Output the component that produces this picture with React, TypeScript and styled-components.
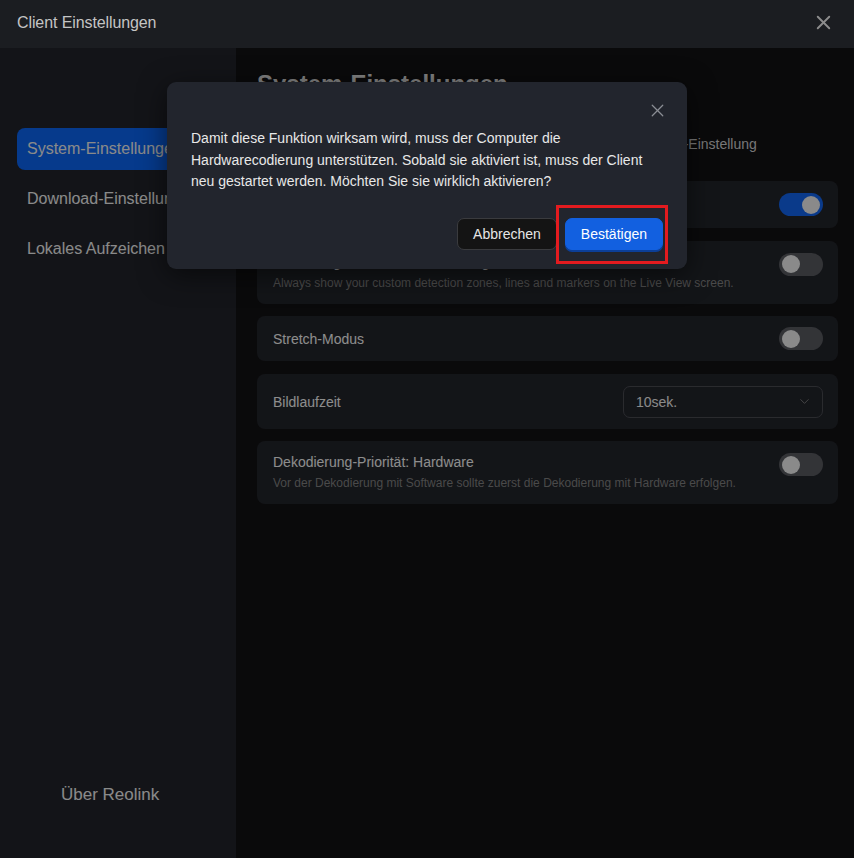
import { ChevronDown, X } from 'lucide-react';
import { createGlobalStyle, styled } from 'styled-components';

const GlobalStyle = createGlobalStyle`
  html, body {
    margin: 0;
    padding: 0;
    background: #0b0b0c;
  }
  body {
    font-family: "Liberation Sans", Arial, sans-serif;
  }
  * {
    box-sizing: border-box;
  }
`;

const Window = styled.div`
  position: relative;
  display: flex;
  flex-direction: column;
  width: 854px;
  height: 858px;
  overflow: hidden;
  background: #111113;
`;

const Header = styled.header`
  display: flex;
  align-items: center;
  justify-content: space-between;
  height: 48px;
  flex-shrink: 0;
  padding: 0 19px 3px 17px;
  background: #1b1d21;
`;

const WindowTitle = styled.span`
  font-size: 16px;
  color: #c4c4c4;
  letter-spacing: -0.1px;
`;

const IconButton = styled.button<{ $color: string }>`
  display: flex;
  align-items: center;
  justify-content: center;
  padding: 0;
  border: none;
  background: transparent;
  color: ${(p) => p.$color};
  cursor: pointer;
`;

const Body = styled.div`
  position: relative;
  display: flex;
  flex: 1;
  min-height: 0;
`;

const Sidebar = styled.nav`
  display: flex;
  flex-direction: column;
  justify-content: space-between;
  width: 236px;
  flex-shrink: 0;
  padding: 80px 17px 53px;
  background: #202228;
`;

const NavList = styled.div`
  display: flex;
  flex-direction: column;
  gap: 8px;
`;

const NavItem = styled.div<{ $active?: boolean }>`
  display: flex;
  align-items: center;
  height: 42px;
  padding: 0 10px;
  border-radius: 8px;
  font-size: 16px;
  color: #e6e6e6;
  white-space: nowrap;
  overflow: hidden;
  background: ${(p) => (p.$active ? '#0a61e9' : 'transparent')};
`;

const About = styled.div`
  padding-left: 44px;
  font-size: 17px;
  color: #e6e6e6;
`;

const Main = styled.main`
  display: flex;
  flex-direction: column;
  flex: 1;
  padding: 21px 16px 0 21px;
  background: #111113;
`;

const Heading = styled.h1`
  margin: 0;
  font-size: 24px;
  line-height: 30px;
  font-weight: 700;
  color: #d8d8d8;
`;

const Tabs = styled.div`
  display: flex;
  gap: 39px;
  margin-top: 35px;
  height: 20px;
  align-items: center;
`;

const Tab = styled.span`
  font-size: 14px;
  color: #c6c6c6;
  white-space: nowrap;
`;

const CardList = styled.div`
  display: flex;
  flex-direction: column;
  gap: 12.5px;
  margin-top: 27px;
`;

const Card = styled.div<{ $pad?: string }>`
  display: flex;
  flex-direction: column;
  justify-content: center;
  padding: ${(p) => p.$pad || '12px 15px 12px 16px'};
  border-radius: 8px;
  background: #212329;
`;

const Row = styled.div<{ $top?: boolean }>`
  display: flex;
  align-items: ${(p) => (p.$top ? 'flex-start' : 'center')};
  justify-content: space-between;
  gap: 16px;
`;

const Label = styled.span`
  font-size: 14px;
  line-height: 18px;
  color: #ebebeb;
`;

const Description = styled.p`
  margin: -1px 0 0;
  font-size: 12px;
  line-height: 16px;
  color: #7c7c7c;
`;

const Toggle = styled.span<{ $on?: boolean }>`
  position: relative;
  display: inline-block;
  width: 44px;
  height: 23px;
  flex-shrink: 0;
  border-radius: 12px;
  background: ${(p) => (p.$on ? '#1161e6' : '#55575d')};

  &::after {
    content: '';
    position: absolute;
    top: 2.5px;
    left: ${(p) => (p.$on ? '23px' : '3px')};
    width: 18px;
    height: 18px;
    border-radius: 50%;
    background: #e6e6e6;
  }
`;

const Select = styled.div`
  display: flex;
  align-items: center;
  justify-content: space-between;
  width: 200px;
  height: 32px;
  padding: 0 10px 0 12px;
  border: 1px solid #46484e;
  border-radius: 7px;
  font-size: 14px;
  color: #e6e6e6;
`;

const Chevron = styled.span`
  display: flex;
  color: #8e8e8e;
`;

const Overlay = styled.div`
  position: absolute;
  inset: 0;
  background: rgba(0, 0, 0, 0.4);
`;

const Dialog = styled.div`
  position: absolute;
  top: 82px;
  left: 167px;
  width: 520px;
  padding: 46px 24px 19px;
  border-radius: 9px;
  background: #22252d;
  box-shadow: 0 6px 28px rgba(0, 0, 0, 0.55);
`;

const DialogClose = styled(IconButton)`
  position: absolute;
  top: 18px;
  right: 19px;
`;

const DialogText = styled.p`
  margin: 0;
  font-size: 14px;
  line-height: 21.5px;
  color: #e8e8e8;
`;

const DialogFooter = styled.div`
  display: flex;
  justify-content: flex-end;
  gap: 8px;
  margin-top: 25px;
`;

const Button = styled.button<{ $primary?: boolean }>`
  height: 32px;
  padding: 0 15px;
  border-radius: 7px;
  font-family: inherit;
  font-size: 14px;
  cursor: pointer;
  color: ${(p) => (p.$primary ? '#ffffff' : '#e6e6e6')};
  background: ${(p) => (p.$primary ? '#1260e0' : '#141414')};
  border: 1px solid ${(p) => (p.$primary ? '#1260e0' : '#3a3b3e')};
  box-shadow: ${(p) => (p.$primary ? '0 2px 0 #0c3f98' : 'none')};
`;

const Highlight = styled.span`
  position: relative;
  display: inline-flex;

  &::before {
    content: '';
    position: absolute;
    top: -13px;
    left: -9px;
    right: -5px;
    bottom: -14px;
    border: 3px solid #e31b1f;
    pointer-events: none;
  }
`;

const App = () => {
  return (
    <>
      <GlobalStyle />
      <Window>
        <Header>
          <WindowTitle>Client Einstellungen</WindowTitle>
          <IconButton $color="#8c8c8c" aria-label="Schließen">
            <X size={23} strokeWidth={2} />
          </IconButton>
        </Header>

        <Body>
          <Sidebar>
            <NavList>
              <NavItem $active>System-Einstellungen</NavItem>
              <NavItem>Download-Einstellungen</NavItem>
              <NavItem>Lokales Aufzeichen</NavItem>
            </NavList>
            <About>Über Reolink</About>
          </Sidebar>

          <Main>
            <Heading>System-Einstellungen</Heading>
            <Tabs>
              <Tab>Allgemeine Einstellung</Tab>
              <Tab>Vorschau-Einstellung</Tab>
              <Tab>Wiedergabe-Einstellung</Tab>
            </Tabs>

            <CardList>
              <Card $pad="12px 15px 12px 16px">
                <Row>
                  <Label>Hardware-Dekodierung</Label>
                  <Toggle $on />
                </Row>
              </Card>

              <Card $pad="12px 15px 13px 16px">
                <Row $top>
                  <Label>Erkennungsbereiche immer anzeigen</Label>
                  <Toggle />
                </Row>
                <Description>
                  Always show your custom detection zones, lines and markers on the Live View screen.
                </Description>
              </Card>

              <Card $pad="11px 15px 11px 16px">
                <Row>
                  <Label>Stretch-Modus</Label>
                  <Toggle />
                </Row>
              </Card>

              <Card $pad="12px 15px 11px 16px">
                <Row>
                  <Label>Bildlaufzeit</Label>
                  <Select>
                    <span>10sek.</span>
                    <Chevron>
                      <ChevronDown size={15} strokeWidth={1.2} />
                    </Chevron>
                  </Select>
                </Row>
              </Card>

              <Card $pad="12px 15px 13px 16px">
                <Row $top>
                  <Label>Dekodierung-Priorität: Hardware</Label>
                  <Toggle />
                </Row>
                <Description>
                  Vor der Dekodierung mit Software sollte zuerst die Dekodierung mit Hardware erfolgen.
                </Description>
              </Card>
            </CardList>
          </Main>

          <Overlay />
        </Body>

        <Dialog role="dialog">
          <DialogClose $color="#8b8e94" aria-label="Schließen">
            <X size={21} strokeWidth={1.4} />
          </DialogClose>
          <DialogText>
            Damit diese Funktion wirksam wird, muss der Computer die Hardwarecodierung unterstützen. Sobald sie
            aktiviert ist, muss der Client neu gestartet werden. Möchten Sie sie wirklich aktivieren?
          </DialogText>
          <DialogFooter>
            <Button>Abbrechen</Button>
            <Highlight>
              <Button $primary>Bestätigen</Button>
            </Highlight>
          </DialogFooter>
        </Dialog>
      </Window>
    </>
  );
};

export default App;
